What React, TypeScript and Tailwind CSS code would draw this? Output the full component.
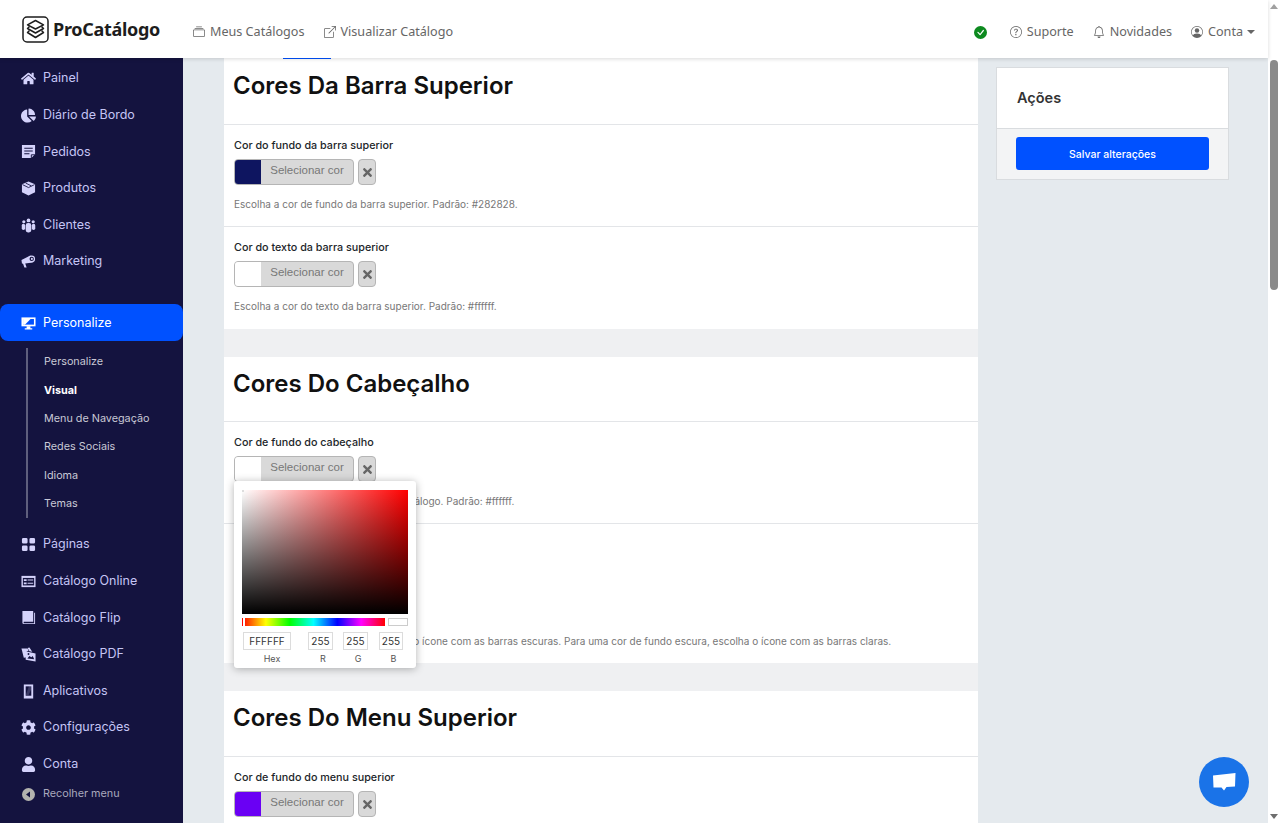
import React from 'react';
import { BsBell, BsBoxArrowUpRight, BsCheckCircleFill, BsCollection, BsGridFill, BsPersonCircle, BsQuestionCircle } from 'react-icons/bs';
import { FaChartPie, FaCog, FaHome, FaTimes, FaUser } from 'react-icons/fa';

type IconProps = { className?: string };
const bg = '#14133f';

const PedidosIcon = ({ className }: IconProps) => (
  <svg className={className} viewBox="0 0 16 16" fill="currentColor">
    <path d="M1 1h14v10l-4 4H1Z" />
    <path d="M3.5 4.5h9M3.5 7.5h9M3.5 10.5h5.5" stroke={bg} strokeWidth="1.1" />
    <path d="M11 15v-3.5h4" fill="none" stroke={bg} strokeWidth="1" />
  </svg>
);

const ProdutosIcon = ({ className }: IconProps) => (
  <svg className={className} viewBox="0 0 16 16" fill="currentColor">
    <path d="M8 0.5 15 3.5V12L8 15.5 1 12V3.5Z" />
    <path d="M1.5 3.8 8 7l6.5-3.2M5 2.2l6 3" fill="none" stroke={bg} strokeWidth="0.9" />
  </svg>
);

const ClientesIcon = ({ className }: IconProps) => (
  <svg className={className} viewBox="0 0 16 16" fill="currentColor">
    <circle cx="8" cy="2.6" r="2" />
    <circle cx="3" cy="4" r="1.7" />
    <circle cx="13" cy="4" r="1.7" />
    <rect x="0.8" y="6.2" width="3.6" height="6.5" rx="1.7" />
    <rect x="11.6" y="6.2" width="3.6" height="6.5" rx="1.7" />
    <rect x="5" y="5.4" width="6" height="10" rx="2.5" />
  </svg>
);

const MarketingIcon = ({ className }: IconProps) => (
  <svg className={className} viewBox="0 0 16 16" fill="currentColor">
    <path d="M0.5 6.5 10 1.5 12.5 9 4.5 10.2 6 14.5H3.6L2.2 10.4 1 10.2Z" />
    <circle cx="11.3" cy="5.2" r="3.7" />
    <circle cx="11.4" cy="5.2" r="2.3" fill={bg} />
    <circle cx="11.6" cy="5.2" r="1.1" />
  </svg>
);

const DesktopIcon = ({ className }: IconProps) => (
  <svg className={className} viewBox="0 0 16 16" fill="currentColor">
    <path d="M0.5 1.5h15v9.5H0.5Z" />
    <path d="M2.2 3.2h11.6v6H2.2Z" fill="#0051ff" />
    <path d="M2.2 3.2h8l-6 6h-2Z" fill="currentColor" />
    <path d="M6 11h4v2h2v1.5H4V13h2Z" />
  </svg>
);

const OnlineIcon = ({ className }: IconProps) => (
  <svg className={className} viewBox="0 0 16 16" fill="currentColor">
    <path d="M0.5 2h15v12H0.5Z" />
    <path d="M2 4.2h12v8H2Z" fill={bg} />
    <path d="M3 5.5h3v2H3ZM3 9h3v2H3ZM7 5.8h6v1.2H7ZM7 9.3h6v1.2H7Z" />
  </svg>
);

const FlipIcon = ({ className }: IconProps) => (
  <svg className={className} viewBox="0 0 16 16" fill="currentColor">
    <path d="M1.5 1h11.5v11.5H3a1.5 1.5 0 0 0 0 1.5h11V3h1v12H3a1.5 1.5 0 0 1-1.5-1.5Z" />
  </svg>
);

const PdfIcon = ({ className }: IconProps) => (
  <svg className={className} viewBox="0 0 16 16" fill="currentColor">
    <path d="M0.5 1.5h6.5l1 2.5-2 0.5V11L3 11.5Z" />
    <path d="M5 4.5 15.5 7v8.5L5 13.5Z" />
    <path d="M6.8 12.3 9 9.5l2 1.5 1.5-1.5 1.6 3.5Z" fill={bg} />
    <circle cx="8" cy="7.5" r="1" fill={bg} />
    <path d="M7 1 9 0.5 12 5 9 4.5Z" />
  </svg>
);

const AppsIcon = ({ className }: IconProps) => (
  <svg className={className} viewBox="0 0 16 16" fill="currentColor">
    <path d="M3 0.5h10v15H3Z" />
    <path d="M5 2.5h6v10H5Z" fill={bg} />
    <path d="M8.5 2.5H11v3L8 12H5Z" fill="currentColor" opacity="0.2" />
  </svg>
);

const topItems = [
  { label: 'Painel', icon: FaHome },
  { label: 'Diário de Bordo', icon: FaChartPie },
  { label: 'Pedidos', icon: PedidosIcon },
  { label: 'Produtos', icon: ProdutosIcon },
  { label: 'Clientes', icon: ClientesIcon },
  { label: 'Marketing', icon: MarketingIcon },
];

const bottomItems = [
  { label: 'Páginas', icon: BsGridFill },
  { label: 'Catálogo Online', icon: OnlineIcon },
  { label: 'Catálogo Flip', icon: FlipIcon },
  { label: 'Catálogo PDF', icon: PdfIcon },
  { label: 'Aplicativos', icon: AppsIcon },
  { label: 'Configurações', icon: FaCog },
  { label: 'Conta', icon: FaUser },
];

const subItems = ['Personalize', 'Visual', 'Menu de Navegação', 'Redes Sociais', 'Idioma', 'Temas'];

const NavItem = ({ label, icon: Icon }: { label: string; icon: React.ElementType }) => (
  <div className="flex h-[36.6px] items-center pl-[21px] text-[12.5px] text-[#c5c5f5]">
    <span className="flex w-[22px] shrink-0 items-center text-[#d4d2fb]">
      <Icon className="h-[15px] w-[15px]" />
    </span>
    {label}
  </div>
);

const Logo = () => (
  <svg width="27" height="27" viewBox="0 0 27 27" fill="none" stroke="#1d1d1d" strokeWidth="1.5" strokeLinejoin="round">
    <rect x="1" y="1" width="25" height="25" rx="4" />
    <path d="M13.5 4.5 21.5 8.8 13.5 13 5.5 8.8Z" />
    <path d="M7.5 10.5 5.5 12.5 13.5 17 21.5 12.5 19.5 10.5" />
    <path d="M7.5 14.5 5.5 16.5 13.5 21.5 21.5 16.5 19.5 14.5" />
  </svg>
);

const ColorField = ({ label, hint, color }: { label: string; hint?: React.ReactNode; color: string }) => (
  <div className="h-[102px] border-b border-[#e3e5e8] px-[10px] pt-[14px] last:border-b-0">
    <div className="text-[10.75px] leading-[14px] font-medium text-[#212529]">{label}</div>
    <div className="mt-[6px] flex gap-[4px]">
      <div className="flex h-[26px] w-[120px] overflow-hidden rounded-[4px] border border-[#b5b5b5] bg-[#d9d9d9]">
        <div className="w-[26px] shrink-0" style={{ backgroundColor: color }} />
        <span className="flex-1 pt-[2px] text-center font-['Liberation_Sans',sans-serif] text-[11.5px] leading-[17px] text-[#777]">Selecionar cor</span>
      </div>
      <div className="flex h-[26px] w-[18px] items-center justify-center rounded-[4px] border border-[#b5b5b5] bg-[#d9d9d9] text-[#666]">
        <FaTimes className="h-[13px] w-[13px]" />
      </div>
    </div>
    {hint && <p className="mt-[12px] text-[10px] leading-[14px] whitespace-nowrap text-[#777]">{hint}</p>}
  </div>
);

const SectionTitle = ({ children, height }: { children: React.ReactNode; height: string }) => (
  <div className={`flex items-center border-b border-[#e3e5e8] px-[9px] pb-[11px] ${height}`}>
    <h2 className="text-[24px] leading-none font-semibold text-[#111]">{children}</h2>
  </div>
);

const PickerField = ({ value, label, width, labelClass }: { value: string; label: string; width: string; labelClass: string }) => (
  <div className={`flex flex-col items-center ${width}`}>
    <div className="flex h-[18px] w-full items-center justify-center border border-[#dcdcdc] text-[10px] text-[#333]">{value}</div>
    <span className={`mt-[3px] text-[9px] leading-[12px] text-[#555] ${labelClass}`}>{label}</span>
  </div>
);

const ColorPicker = () => (
  <div className="absolute top-[59px] left-[10px] z-10 h-[187px] w-[182px] rounded-[3px] bg-white px-[8px] pt-[9px] shadow-[0_1px_8px_rgba(0,0,0,0.3)]">
    <div className="relative h-[124px] w-[166px] bg-[linear-gradient(to_right,#fff,#f00)]">
      <div className="h-full w-full bg-[linear-gradient(to_bottom,transparent,#000)]" />
      <div className="absolute top-0 left-0 h-[2px] w-[2px] bg-[#ddd]" />
    </div>
    <div className="mt-[4px] flex gap-[3px]">
      <div className="relative h-[8px] w-[143px] bg-[linear-gradient(to_right,#f00,#ff0,#0f0,#0ff,#00f,#f0f,#f00)]">
        <div className="absolute top-0 left-[1px] h-full w-[2px] bg-white" />
      </div>
      <div className="h-[8px] w-[20px] border border-[#ccc] bg-white" />
    </div>
    <div className="mt-[6px] ml-[1px] flex">
      <PickerField value="FFFFFF" label="Hex" width="w-[48px]" labelClass="ml-[10px]" />
      <div className="w-[17px]" />
      <PickerField value="255" label="R" width="w-[25px]" labelClass="ml-[5px]" />
      <div className="w-[10px]" />
      <PickerField value="255" label="G" width="w-[25px]" labelClass="ml-[5px]" />
      <div className="w-[11px]" />
      <PickerField value="255" label="B" width="w-[24px]" labelClass="ml-[5px]" />
    </div>
  </div>
);

const App: React.FC = () => {
  return (
    <div className="flex h-[823px] w-[1280px] overflow-hidden font-['Inter',sans-serif]">
      <div className="relative flex min-w-0 flex-1 flex-col">
        <header className="z-20 flex h-[58px] shrink-0 items-center bg-white pr-[13px] pl-[22px] font-['Noto_Sans',sans-serif] text-[12.6px] text-[#666] shadow-[0_1px_4px_rgba(0,0,0,0.15)]">
          <Logo />
          <span className="ml-[4px] text-[18px] font-bold tracking-[-0.3px] text-[#1d1d1d]">ProCatálogo</span>
          <span className="mt-[6px] ml-[33px] flex items-center gap-[5px]"><BsCollection className="h-[12px] w-[12px]" />Meus Catálogos</span>
          <span className="mt-[6px] ml-[19px] flex items-center gap-[5px]"><BsBoxArrowUpRight className="h-[12px] w-[12px]" />Visualizar Catálogo</span>
          <BsCheckCircleFill className="mt-[6px] ml-auto h-[13px] w-[13px] text-[#0d8a1f]" />
          <span className="mt-[6px] ml-[23px] flex items-center gap-[5px]"><BsQuestionCircle className="h-[12px] w-[12px]" />Suporte</span>
          <span className="mt-[6px] ml-[19px] flex items-center gap-[5px]"><BsBell className="h-[12px] w-[12px]" />Novidades</span>
          <span className="mt-[6px] ml-[19px] flex items-center gap-[5px]"><BsPersonCircle className="h-[12px] w-[12px]" />Conta<span className="ml-[-1px] border-x-[4px] border-t-[4px] border-x-transparent border-t-[#666]" /></span>
        </header>

        <div className="flex min-h-0 flex-1">
          <aside className="flex w-[183px] shrink-0 flex-col bg-[#14133f] pt-[2.5px]">
            {topItems.map((item) => (
              <NavItem key={item.label} {...item} />
            ))}
            <div className="mt-[24px] flex h-[37px] items-center rounded-[8px] bg-[#0051ff] pt-[2px] pl-[21px] text-[12.5px] text-white">
              <span className="flex w-[22px] items-center"><DesktopIcon className="h-[15px] w-[15px]" /></span>
              Personalize
            </div>
            <div className="mt-[7px] mb-[8px] ml-[26px] border-l-2 border-[#5f5f7d] pl-[16px]">
              {subItems.map((item) => (
                <div key={item} className={`flex h-[28.4px] items-center text-[10.8px] ${item === 'Visual' ? 'font-bold text-white' : 'text-[#c9c9d6]'}`}>
                  {item}
                </div>
              ))}
            </div>
            {bottomItems.map((item) => (
              <NavItem key={item.label} {...item} />
            ))}
            <div className="flex h-[24px] items-center pl-[22px] text-[10.8px] text-[#a9a9bd]">
              <span className="flex w-[21px] items-center">
                <svg width="13" height="13" viewBox="0 0 13 13">
                  <circle cx="6.5" cy="6.5" r="6.5" fill="#b3b3ae" />
                  <path d="M8 3.5v6L4 6.5Z" fill="#14133f" />
                </svg>
              </span>
              Recolher menu
            </div>
          </aside>

          <main className="relative flex min-w-0 flex-1 gap-[18px] bg-[#e5eaee] pr-[39px] pl-[41px]">
            <div className="w-[754px] shrink-0">
              <div className="absolute top-0 left-[100px] h-[1px] w-[48px] bg-[#0051ff]" />
              <section className="bg-white">
                <SectionTitle height="h-[67px]">Cores Da Barra Superior</SectionTitle>
                <ColorField label="Cor do fundo da barra superior" color="#0e1560" hint="Escolha a cor de fundo da barra superior. Padrão: #282828." />
                <ColorField label="Cor do texto da barra superior" color="#ffffff" hint="Escolha a cor do texto da barra superior. Padrão: #ffffff." />
              </section>
              <div className="h-[28px] bg-[#eff0f2]" />
              <section className="bg-white">
                <SectionTitle height="h-[65px]">Cores Do Cabeçalho</SectionTitle>
                <div className="relative">
                  <ColorField label="Cor de fundo do cabeçalho" color="#ffffff" hint="Escolha a cor de fundo do topo do catálogo. Padrão: #ffffff." />
                  <ColorPicker />
                </div>
                <div className="flex h-[139px] items-end px-[10px] pb-[15px]">
                  <p className="text-[10px] leading-[14px] whitespace-nowrap text-[#777]">Para uma cor de fundo clara, escolha o ícone com as barras escuras. Para uma cor de fundo escura, escolha o ícone com as barras claras.</p>
                </div>
              </section>
              <div className="h-[28px] bg-[#eff0f2]" />
              <section className="bg-white">
                <SectionTitle height="h-[66px]">Cores Do Menu Superior</SectionTitle>
                <ColorField label="Cor de fundo do menu superior" color="#6a00f4" />
              </section>
            </div>

            <div className="mt-[9px] h-[113px] w-[233px] shrink-0 border border-[#d9dcdf] bg-[#f3f4f5]">
              <div className="flex h-[61px] items-center border-b border-[#d9dcdf] bg-white px-[20px] text-[14.5px] font-semibold text-[#333]">Ações</div>
              <div className="px-[19px] pt-[8px]">
                <div className="flex h-[33px] items-center justify-center rounded-[3px] bg-[#0051ff] pt-[2px] text-[10.5px] font-medium text-white">Salvar alterações</div>
              </div>
            </div>

            <div className="fixed top-[757px] left-[1199px] flex h-[50px] w-[50px] items-center justify-center rounded-full bg-[#1a73e8]">
              <svg width="24" height="21" viewBox="0 0 24 21" fill="#fff">
                <path d="M1 3.5 23.5 1 23 14.5 14.5 15 12 18.5 9.5 15.5 1.5 15.5Z" />
              </svg>
            </div>
          </main>
        </div>
      </div>

      <div className="flex w-[12px] shrink-0 flex-col items-center bg-white">
        <div className="mt-[4px] border-x-[4px] border-b-[5px] border-x-transparent border-b-[#a0a0a0]" />
        <div className="mt-[51px] h-[230px] w-[8px] rounded-[4px] bg-[#8a8a8a]" />
        <div className="mt-auto mb-[4px] border-x-[4px] border-t-[5px] border-x-transparent border-t-[#6e6e6e]" />
      </div>
    </div>
  );
};

export default App;
